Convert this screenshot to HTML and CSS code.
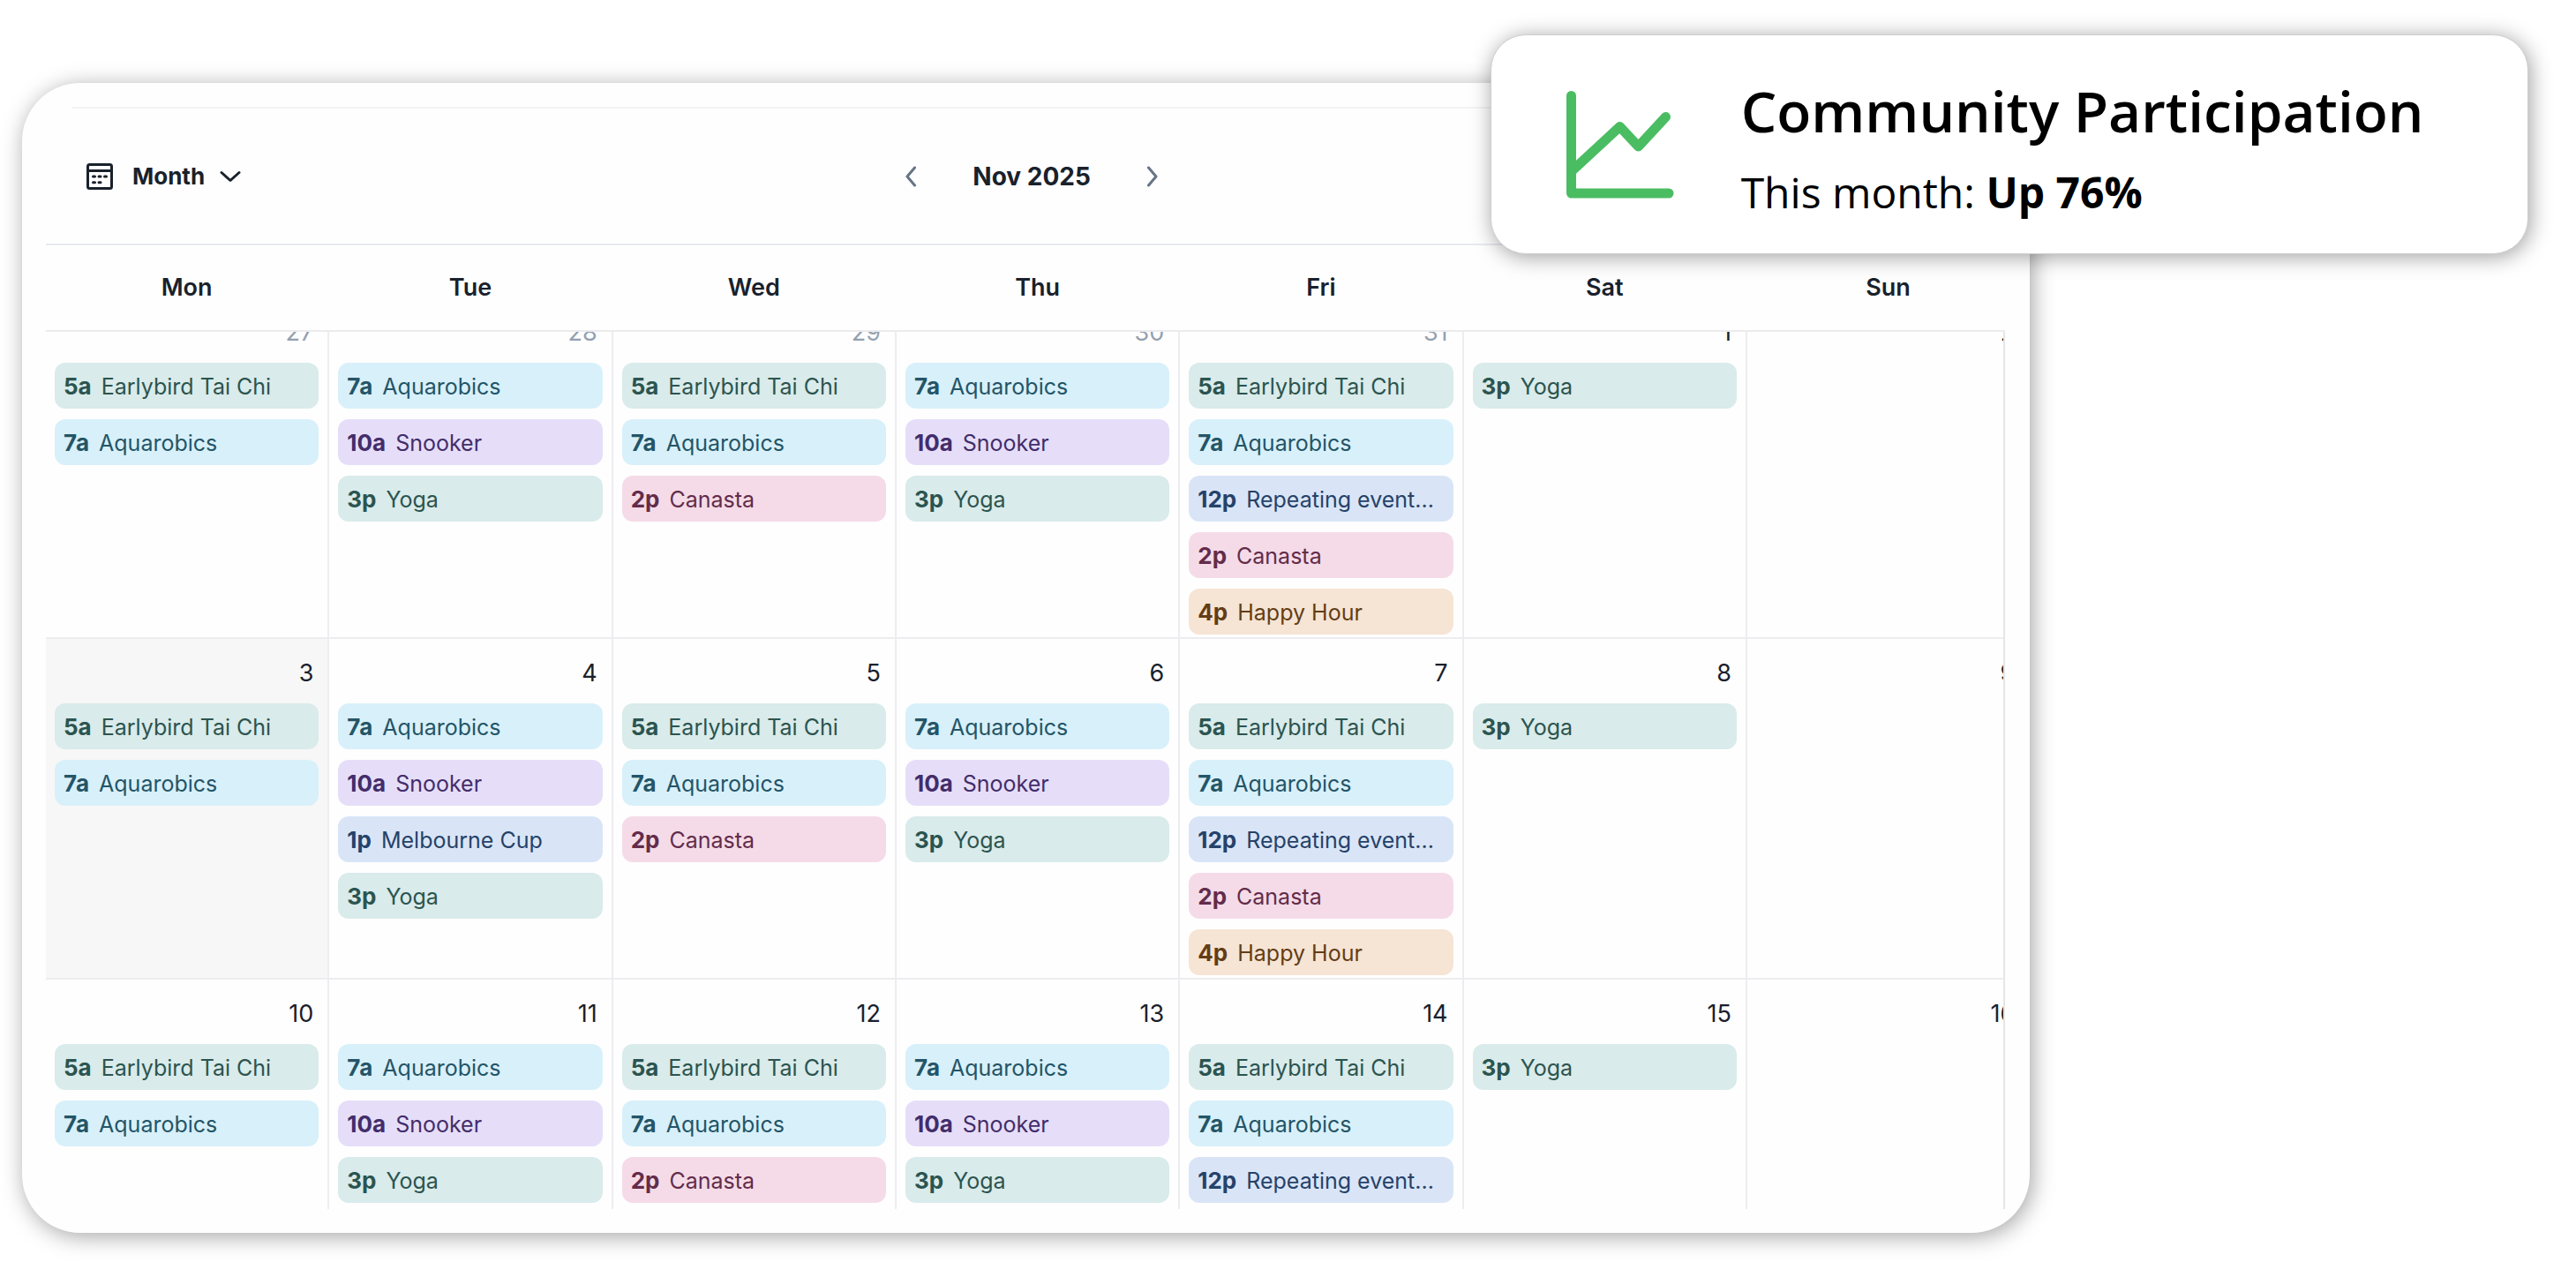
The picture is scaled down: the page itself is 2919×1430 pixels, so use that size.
FILE: index.html
```html
<!DOCTYPE html>
<html lang="en">
<head>
<meta charset="utf-8">
<meta name="viewport" content="width=device-width, initial-scale=1">
<title>Community calendar</title>
<link rel="stylesheet" href="styles.css">
</head>
<body>
<main class="stage">
  <section class="calendar" aria-label="Calendar">
    <hr class="calendar-rule">
    <header class="toolbar">
      <label class="view-picker">
        <svg class="icon-calendar" viewBox="0 0 30 30" fill="none" stroke="currentColor" stroke-width="3" aria-hidden="true">
          <rect x="1.5" y="1.5" width="27" height="27" rx="2"/>
          <path d="M2 8.500H28"/>
          <path d="M7.500 15H9.500M14 15H16M20.500 15H22.500M7.500 21.700H9.500M14 21.700H16" stroke-linecap="round"/>
        </svg>
        <select class="view-select" aria-label="View">
          <option selected>Month</option>
          <option>Week</option>
          <option>Day</option>
        </select>
        <svg class="icon-chevron" viewBox="0 0 24 14" fill="none" stroke="currentColor" stroke-width="3" stroke-linecap="round" stroke-linejoin="round" aria-hidden="true"><path d="M2 2.500 12 11.500 22 2.500"/></svg>
      </label>
      <nav class="pager" aria-label="Month">
        <button class="pager-button" type="button" aria-label="Previous month">
          <svg viewBox="0 0 12 24" fill="none" stroke="currentColor" stroke-width="3" stroke-linecap="round" stroke-linejoin="round"><path d="M10.500 2 2 12 10.500 22"/></svg>
        </button>
        <h1 class="pager-title">Nov 2025</h1>
        <button class="pager-button" type="button" aria-label="Next month">
          <svg viewBox="0 0 12 24" fill="none" stroke="currentColor" stroke-width="3" stroke-linecap="round" stroke-linejoin="round"><path d="M1.500 2 10 12 1.500 22"/></svg>
        </button>
      </nav>
    </header>
    <div class="weekdays">
      <table class="grid">
        <thead>
          <tr><th scope="col">Mon</th><th scope="col">Tue</th><th scope="col">Wed</th><th scope="col">Thu</th><th scope="col">Fri</th><th scope="col">Sat</th><th scope="col">Sun</th></tr>
        </thead>
      </table>
    </div>
    <div class="viewport">
      <table class="grid weeks">
        <tbody>
          <tr>
            <td class="other"><time>27</time>
              <a class="event green" href="#"><b>5a</b>Earlybird Tai Chi</a>
              <a class="event sky" href="#"><b>7a</b>Aquarobics</a></td>
            <td class="other"><time>28</time>
              <a class="event sky" href="#"><b>7a</b>Aquarobics</a>
              <a class="event purple" href="#"><b>10a</b>Snooker</a>
              <a class="event green" href="#"><b>3p</b>Yoga</a></td>
            <td class="other"><time>29</time>
              <a class="event green" href="#"><b>5a</b>Earlybird Tai Chi</a>
              <a class="event sky" href="#"><b>7a</b>Aquarobics</a>
              <a class="event pink" href="#"><b>2p</b>Canasta</a></td>
            <td class="other"><time>30</time>
              <a class="event sky" href="#"><b>7a</b>Aquarobics</a>
              <a class="event purple" href="#"><b>10a</b>Snooker</a>
              <a class="event green" href="#"><b>3p</b>Yoga</a></td>
            <td class="other"><time>31</time>
              <a class="event green" href="#"><b>5a</b>Earlybird Tai Chi</a>
              <a class="event sky" href="#"><b>7a</b>Aquarobics</a>
              <a class="event blue" href="#"><b>12p</b>Repeating event...</a>
              <a class="event pink" href="#"><b>2p</b>Canasta</a>
              <a class="event orange" href="#"><b>4p</b>Happy Hour</a></td>
            <td><time>1</time>
              <a class="event green" href="#"><b>3p</b>Yoga</a></td>
            <td><time>2</time></td>
          </tr>
          <tr>
            <td class="today"><time>3</time>
              <a class="event green" href="#"><b>5a</b>Earlybird Tai Chi</a>
              <a class="event sky" href="#"><b>7a</b>Aquarobics</a></td>
            <td><time>4</time>
              <a class="event sky" href="#"><b>7a</b>Aquarobics</a>
              <a class="event purple" href="#"><b>10a</b>Snooker</a>
              <a class="event blue" href="#"><b>1p</b>Melbourne Cup</a>
              <a class="event green" href="#"><b>3p</b>Yoga</a></td>
            <td><time>5</time>
              <a class="event green" href="#"><b>5a</b>Earlybird Tai Chi</a>
              <a class="event sky" href="#"><b>7a</b>Aquarobics</a>
              <a class="event pink" href="#"><b>2p</b>Canasta</a></td>
            <td><time>6</time>
              <a class="event sky" href="#"><b>7a</b>Aquarobics</a>
              <a class="event purple" href="#"><b>10a</b>Snooker</a>
              <a class="event green" href="#"><b>3p</b>Yoga</a></td>
            <td><time>7</time>
              <a class="event green" href="#"><b>5a</b>Earlybird Tai Chi</a>
              <a class="event sky" href="#"><b>7a</b>Aquarobics</a>
              <a class="event blue" href="#"><b>12p</b>Repeating event...</a>
              <a class="event pink" href="#"><b>2p</b>Canasta</a>
              <a class="event orange" href="#"><b>4p</b>Happy Hour</a></td>
            <td><time>8</time>
              <a class="event green" href="#"><b>3p</b>Yoga</a></td>
            <td><time>9</time></td>
          </tr>
          <tr class="last">
            <td><time>10</time>
              <a class="event green" href="#"><b>5a</b>Earlybird Tai Chi</a>
              <a class="event sky" href="#"><b>7a</b>Aquarobics</a></td>
            <td><time>11</time>
              <a class="event sky" href="#"><b>7a</b>Aquarobics</a>
              <a class="event purple" href="#"><b>10a</b>Snooker</a>
              <a class="event green" href="#"><b>3p</b>Yoga</a></td>
            <td><time>12</time>
              <a class="event green" href="#"><b>5a</b>Earlybird Tai Chi</a>
              <a class="event sky" href="#"><b>7a</b>Aquarobics</a>
              <a class="event pink" href="#"><b>2p</b>Canasta</a></td>
            <td><time>13</time>
              <a class="event sky" href="#"><b>7a</b>Aquarobics</a>
              <a class="event purple" href="#"><b>10a</b>Snooker</a>
              <a class="event green" href="#"><b>3p</b>Yoga</a></td>
            <td><time>14</time>
              <a class="event green" href="#"><b>5a</b>Earlybird Tai Chi</a>
              <a class="event sky" href="#"><b>7a</b>Aquarobics</a>
              <a class="event blue" href="#"><b>12p</b>Repeating event...</a></td>
            <td><time>15</time>
              <a class="event green" href="#"><b>3p</b>Yoga</a></td>
            <td><time>16</time></td>
          </tr>
        </tbody>
      </table>
    </div>
  </section>

  <aside class="callout">
    <svg class="callout-icon" viewBox="0 0 122 122" fill="none" stroke="currentColor" stroke-width="11" stroke-linecap="round" stroke-linejoin="round" aria-hidden="true">
      <path d="M5.500 5.500V116H116"/>
      <path d="M7 90 60.500 40.500 81.500 63 112.500 29.500"/>
    </svg>
    <div class="callout-text">
      <h2 class="callout-title">Community Participation</h2>
      <p class="callout-detail">This month: <strong>Up 76%</strong></p>
    </div>
  </aside>
</main>
</body>
</html>
```
FILE: styles.css
```css
* {
  box-sizing: border-box;
}

body {
  margin: 0;
  background: #fff;
  color: #19212c;
  font-family: Inter, "Liberation Sans", sans-serif;
  font-size: 26px;
}

h1,
h2,
p {
  margin: 0;
}

.stage {
  position: relative;
  padding: 94px 21.2% 33px 25px;
}

.calendar {
  padding: 27px 28px 27px 27px;
  border-radius: 66px;
  background: #fefefe;
  box-shadow: 3px 4px 26px rgba(0, 0, 0, 0.36);
}

.calendar-rule {
  height: 2px;
  margin: 0 30px;
  border: 0;
  background: #f3f3f4;
}

.toolbar {
  display: grid;
  grid-template-columns: 1fr auto 1fr;
  align-items: center;
  height: 155px;
  padding: 0 32px 0 46px;
  border-bottom: 2px solid #e9eaee;
}

.view-picker {
  display: flex;
  align-items: center;
}

.icon-calendar {
  width: 30px;
  height: 30px;
  margin-right: 22px;
}

.view-select {
  appearance: none;
  padding: 0 40px 0 0;
  border: 0;
  background: none;
  color: inherit;
  font: 700 26px/32px Inter, "Liberation Sans", sans-serif;
}

.icon-chevron {
  width: 24px;
  height: 14px;
  margin-left: -24px;
  pointer-events: none;
}

.pager {
  display: flex;
  align-items: center;
  gap: 64px;
}

.pager-button {
  width: 12px;
  height: 24px;
  padding: 0;
  border: 0;
  background: none;
  color: #667486;
}

.pager-button svg {
  display: block;
  width: 12px;
  height: 24px;
}

.pager-title {
  font-size: 28px;
  font-weight: 700;
  line-height: 32px;
}

.weekdays {
  border-bottom: 2px solid #ebebed;
}

.grid {
  width: calc(100% + 29px);
  table-layout: fixed;
  border-collapse: separate;
  border-spacing: 0;
}

.grid th {
  height: 96px;
  padding: 0 2px 0 0;
  font-size: 27px;
  font-weight: 600;
  line-height: 32px;
}

.viewport {
  overflow: hidden;
  border-right: 2px solid #e6e6e8;
}

/* The list is scrolled part of the way into the first week. */
.weeks {
  width: calc(100% + 31px);
  margin-top: -38px;
}

.weeks td {
  height: 386px;
  padding: 23px 10px 0;
  border-right: 2px solid #ededf1;
  border-bottom: 2px solid #ededf0;
  vertical-align: top;
}

.weeks .last td {
  height: 260px;
  border-bottom: 0;
}

.weeks .today {
  background: #f7f7f7;
}

.weeks time {
  display: block;
  margin-bottom: 18px;
  padding-right: 6px;
  font-size: 27px;
  line-height: 32px;
  text-align: right;
}

.weeks .other time {
  color: #94a0b0;
}

.event {
  display: block;
  height: 52px;
  margin-bottom: 12px;
  padding: 0 10px;
  border-radius: 12px;
  font-size: 25px;
  line-height: 54px;
  text-decoration: none;
  white-space: nowrap;
}

.event:last-child {
  margin-bottom: 0;
}

.event b {
  margin-right: 11px;
  font-size: 26px;
  font-weight: 700;
}

.green {
  background: #d9ebea;
  color: #2b5450;
}

.sky {
  background: #d8f0fa;
  color: #245567;
}

.purple {
  background: #e6def9;
  color: #432d6a;
}

.blue {
  background: #d9e5f7;
  color: #264269;
}

.pink {
  background: #f5dbe8;
  color: #632c4a;
}

.orange {
  background: #f6e4d4;
  color: #633d16;
}

.callout {
  position: absolute;
  top: 39px;
  right: 54px;
  display: flex;
  align-items: center;
  gap: 76px;
  width: 40.3%;
  height: 249px;
  padding: 0 40px 0 85px;
  border: 1px solid #cfcfcf;
  border-radius: 40px;
  background: #fff;
  color: #000;
  box-shadow: 2px 3px 24px rgba(0, 0, 0, 0.38);
  font-family: "Open Sans", "Noto Sans", sans-serif;
  white-space: nowrap;
}

.callout-icon {
  flex: none;
  width: 122px;
  height: 122px;
  color: #4abd62;
}

.callout-text {
  display: grid;
  gap: 4px;
  padding-top: 8px;
}

.callout-title {
  font-size: 64px;
  font-weight: 600;
  line-height: 96px;
}

.callout-detail {
  font-size: 48px;
  line-height: 80px;
}
```
